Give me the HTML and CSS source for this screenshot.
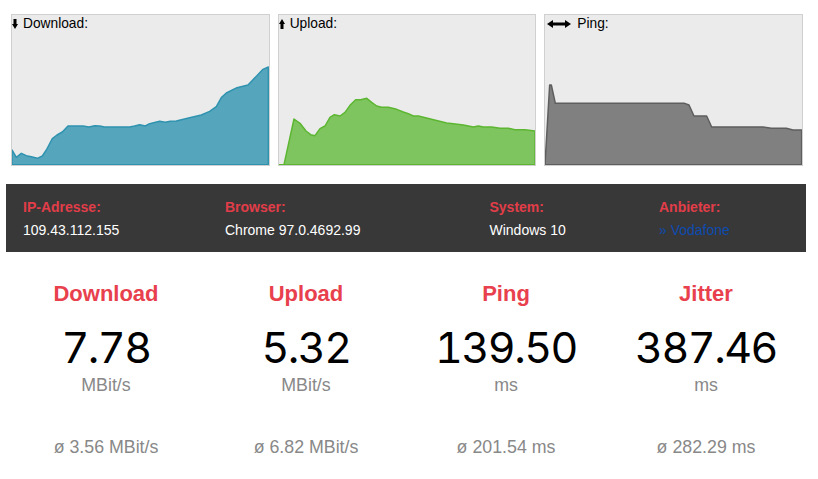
FILE: index.html
```html
<!DOCTYPE html>
<html lang="de">
<head>
<meta charset="utf-8">
<title>Speedtest</title>
<link rel="stylesheet" href="styles.css">
</head>
<body>
<div class="page">
  <section class="charts">
    <div class="chart">
      <div class="chart-label"><svg class="arrow-v" viewBox="0 0 6 10"><path d="M1.5 0h3v5H6L3 10 0 5h1.5z"/></svg><span>Download:</span></div>
      <svg class="plot" viewBox="37 45 770 450" preserveAspectRatio="none"><polygon class="area dl" points="37,494 37,450 50,472 65,460 80,467 95,470 113,475 128,468 140,450 158,416 172,405 188,396 205,378 250,378 268,381 285,377 300,378 315,381 390,381 405,378 420,374 437,378 450,371 480,364 497,367 512,364 530,363 570,353 605,345 630,334 650,320 665,293 680,279 712,263 745,255 790,208 806,201 806,494"/></svg>
    </div>
    <div class="chart">
      <div class="chart-label"><svg class="arrow-v" viewBox="0 0 6 10"><path d="M1.5 10h3V5H6L3 0 0 5h1.5z"/></svg><span>Upload:</span></div>
      <svg class="plot" viewBox="27 45 770 450" preserveAspectRatio="none"><polygon class="area ul" points="27,494 42,494 72,357 90,370 108,393 122,404 135,407 150,386 165,378 180,352 193,344 210,348 225,337 240,316 257,299 272,299 290,295 305,307 320,318 335,322 355,322 380,328 400,336 415,341 430,348 445,348 530,369 550,371 580,375 610,381 625,378 640,381 665,381 690,385 715,385 735,389 765,389 795,393 795,494"/></svg>
    </div>
    <div class="chart">
      <div class="chart-label"><svg class="arrow-h" viewBox="0 0 24 8"><path d="M0 4 6 0v2.5h12V0l6 4-6 4V5.5H6V8z"/></svg><span>Ping:</span></div>
      <svg class="plot" viewBox="21 45 770 450" preserveAspectRatio="none"><polygon class="area pg" points="21,494 35,255 40,255 52,310 440,310 453,315 468,348 506,348 521,381 675,381 700,385 745,385 765,390 791,390 791,494"/></svg>
    </div>
  </section>

  <section class="info">
    <div class="info-col">
      <div class="info-label">IP-Adresse:</div>
      <div class="info-value">109.43.112.155</div>
    </div>
    <div class="info-col">
      <div class="info-label">Browser:</div>
      <div class="info-value">Chrome 97.0.4692.99</div>
    </div>
    <div class="info-col">
      <div class="info-label">System:</div>
      <div class="info-value">Windows 10</div>
    </div>
    <div class="info-col">
      <div class="info-label">Anbieter:</div>
      <div class="info-value"><a class="provider" href="#">» Vodafone</a></div>
    </div>
  </section>

  <section class="stats">
    <div class="stat">
      <h2 class="stat-title">Download</h2>
      <div class="stat-number">7.78</div>
      <div class="stat-unit">MBit/s</div>
      <div class="stat-avg">ø 3.56 MBit/s</div>
    </div>
    <div class="stat">
      <h2 class="stat-title">Upload</h2>
      <div class="stat-number">5.32</div>
      <div class="stat-unit">MBit/s</div>
      <div class="stat-avg">ø 6.82 MBit/s</div>
    </div>
    <div class="stat">
      <h2 class="stat-title">Ping</h2>
      <div class="stat-number">139.50</div>
      <div class="stat-unit">ms</div>
      <div class="stat-avg">ø 201.54 ms</div>
    </div>
    <div class="stat">
      <h2 class="stat-title">Jitter</h2>
      <div class="stat-number">387.46</div>
      <div class="stat-unit">ms</div>
      <div class="stat-avg">ø 282.29 ms</div>
    </div>
  </section>
</div>
</body>
</html>
```

FILE: styles.css
```css
* { box-sizing: border-box; }
html, body { margin: 0; padding: 0; background: #fff; overflow: hidden; }
body { font-family: "Liberation Sans", Arial, sans-serif; color: #000; }

.page { width: 800px; margin-left: 6px; padding-top: 14px; }

.charts {
  display: grid;
  grid-template-columns: repeat(3, 1fr);
  gap: 8px;
  margin: 0 3px 0 5px;
}
.chart {
  position: relative;
  height: 152px;
  background: #ebebeb;
  border: 1px solid #d0d0d0;
}
.chart-label {
  position: absolute;
  top: 1px;
  left: 0;
  display: flex;
  align-items: center;
  gap: 5px;
  font-size: 13.76px;
  line-height: 16px;
}
.arrow-v { width: 6px; height: 10px; display: block; }
.arrow-h { width: 24px; height: 8px; display: block; margin-left: 2px; margin-right: 1px; }
.plot { display: block; width: 100%; height: 100%; }
.area { stroke-width: 1.5px; vector-effect: non-scaling-stroke; stroke-linejoin: round; }
.dl { fill: #55a5bd; stroke: #2f93b0; }
.ul { fill: #7fc55f; stroke: #5cb632; }
.pg { fill: #808080; stroke: #5e5e5e; }

.info {
  display: grid;
  grid-template-columns: 202px 264.5px 169.5px 1fr;
  height: 68px;
  margin-top: 18px;
  padding: 15px 0 0 17px;
  background: #383838;
  font-size: 14px;
  line-height: 16px;
}
.info-label { color: #e23d49; font-weight: 700; }
.info-value { margin-top: 7px; color: #fff; }
.provider { color: #0d4bb0; text-decoration: none; }

.stats { display: grid; grid-template-columns: repeat(4, 1fr); margin-top: 29px; }
.stat { text-align: center; }
.stat-title {
  margin: 0;
  font-size: 22px;
  line-height: 26px;
  font-weight: 700;
  color: #e8404d;
}
.stat-number {
  margin-top: 17px;
  font-family: Inter, "Liberation Sans", sans-serif;
  font-size: 43px;
  line-height: 46px;
  font-weight: 400;
  letter-spacing: -1.5px;
  font-variant-numeric: tabular-nums;
  color: #000;
}
.stat-unit { margin-top: 5px; font-size: 17.8px; line-height: 20px; color: #888; }
.stat-avg { margin-top: 42px; font-size: 17.8px; line-height: 20px; color: #888; }
```
